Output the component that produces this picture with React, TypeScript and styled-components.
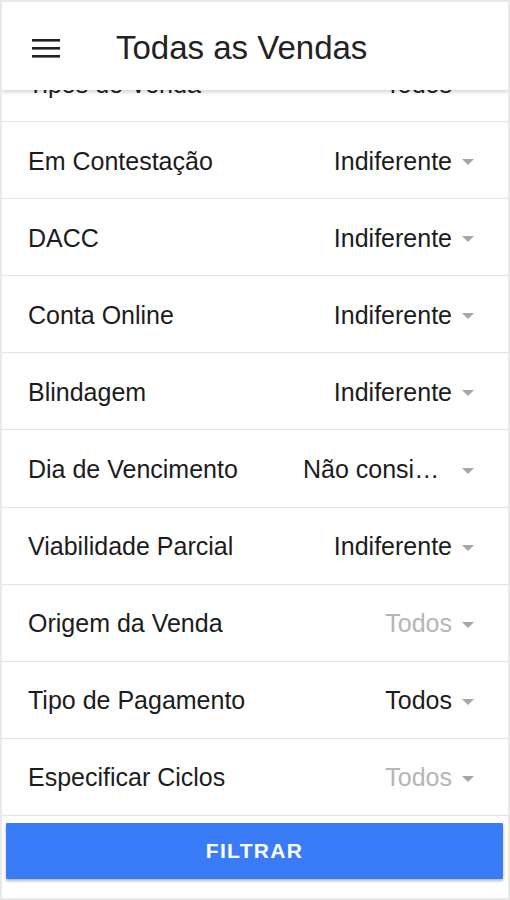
import styled, {createGlobalStyle} from "styled-components";

const GlobalStyle = createGlobalStyle`
    html, body {
        margin: 0;
        padding: 0;
        background: #ffffff;
    }
    * {
        box-sizing: border-box;
    }
`

const Frame = styled.div`
    position: relative;
    width: 510px;
    height: 900px;
    border: 2px solid #e9e9e9;
    background: #ffffff;
    display: flex;
    flex-direction: column;
    overflow: hidden;
    font-family: "Liberation Sans", Arial, sans-serif;
`

// the app bar lies over the scrolled list
const AppBar = styled.header`
    position: absolute;
    top: 0;
    left: 0;
    right: 0;
    height: 88px;
    padding: 4px 0 0 30px;
    display: flex;
    align-items: center;
    gap: 56px;
    background: #ffffff;
    box-shadow: 0 2px 4px rgba(0, 0, 0, 0.18);
    z-index: 2;
`

const MenuButton = styled.button`
    display: flex;
    padding: 0;
    border: none;
    background: none;
    color: #222222;
`

const Title = styled.h1`
    margin: 0;
    font-size: 33px;
    font-weight: normal;
    color: #222222;
`

const FilterList = styled.ul`
    flex: 1;
    margin: 0;
    padding: 43px 0 0;
    list-style: none;
    overflow: hidden;
`

const Row = styled.li`
    height: 77.1px;
    padding: 2px 34px 0 26px;
    display: flex;
    align-items: center;
    justify-content: space-between;
    border-bottom: 1px solid #e4e4e4;
`

const Label = styled.span`
    font-size: 25px;
    color: #1c1c1c;
`

const Select = styled.div`
    display: flex;
    align-items: center;
    gap: 10px;
`

const Value = styled.span<{$placeholder?: boolean}>`
    max-width: 149px;
    font-size: 25px;
    white-space: nowrap;
    overflow: hidden;
    text-overflow: ellipsis;
    color: ${props => props.$placeholder ? "#b5b5b5" : "#1c1c1c"};
`

const Caret = styled.span`
    width: 0;
    height: 0;
    margin-top: 2px;
    border-left: 6px solid transparent;
    border-right: 6px solid transparent;
    border-top: 6px solid #a6a6a6;
`

const Footer = styled.div`
    height: 82px;
    padding: 7px 5px 0 4px;
    background: #ffffff;
`

const FilterButton = styled.button`
    width: 100%;
    height: 56px;
    border: none;
    border-radius: 1px;
    background: #3a7cf7;
    color: #ffffff;
    font-family: "Liberation Sans", Arial, sans-serif;
    font-size: 21px;
    font-weight: bold;
    letter-spacing: 1.3px;
    box-shadow: 0 2px 3px rgba(0, 0, 0, 0.3);
`

interface IFilter {
    label: string,
    value: string,
    placeholder?: boolean
}

const filters: IFilter[] = [
    {label: "Tipos de Venda", value: "Todos"},
    {label: "Em Contestação", value: "Indiferente"},
    {label: "DACC", value: "Indiferente"},
    {label: "Conta Online", value: "Indiferente"},
    {label: "Blindagem", value: "Indiferente"},
    {label: "Dia de Vencimento", value: "Não considerar"},
    {label: "Viabilidade Parcial", value: "Indiferente"},
    {label: "Origem da Venda", value: "Todos", placeholder: true},
    {label: "Tipo de Pagamento", value: "Todos"},
    {label: "Especificar Ciclos", value: "Todos", placeholder: true},
]

const MenuIcon = () => (
    <svg width="28" height="19" viewBox="0 0 28 19">
        <rect x="0" y="0" width="28" height="2.6" fill="currentColor"/>
        <rect x="0" y="8" width="28" height="2.6" fill="currentColor"/>
        <rect x="0" y="16" width="28" height="2.6" fill="currentColor"/>
    </svg>
)

const App = () => {
    return (
        <Frame>
            <GlobalStyle/>
            <AppBar>
                <MenuButton aria-label="menu"><MenuIcon/></MenuButton>
                <Title>Todas as Vendas</Title>
            </AppBar>
            <FilterList>
                {filters.map((f) =>
                    <Row key={f.label}>
                        <Label>{f.label}</Label>
                        <Select>
                            <Value $placeholder={f.placeholder}>{f.value}</Value>
                            <Caret/>
                        </Select>
                    </Row>
                )}
            </FilterList>
            <Footer>
                <FilterButton>FILTRAR</FilterButton>
            </Footer>
        </Frame>
    )
}
export default App;
